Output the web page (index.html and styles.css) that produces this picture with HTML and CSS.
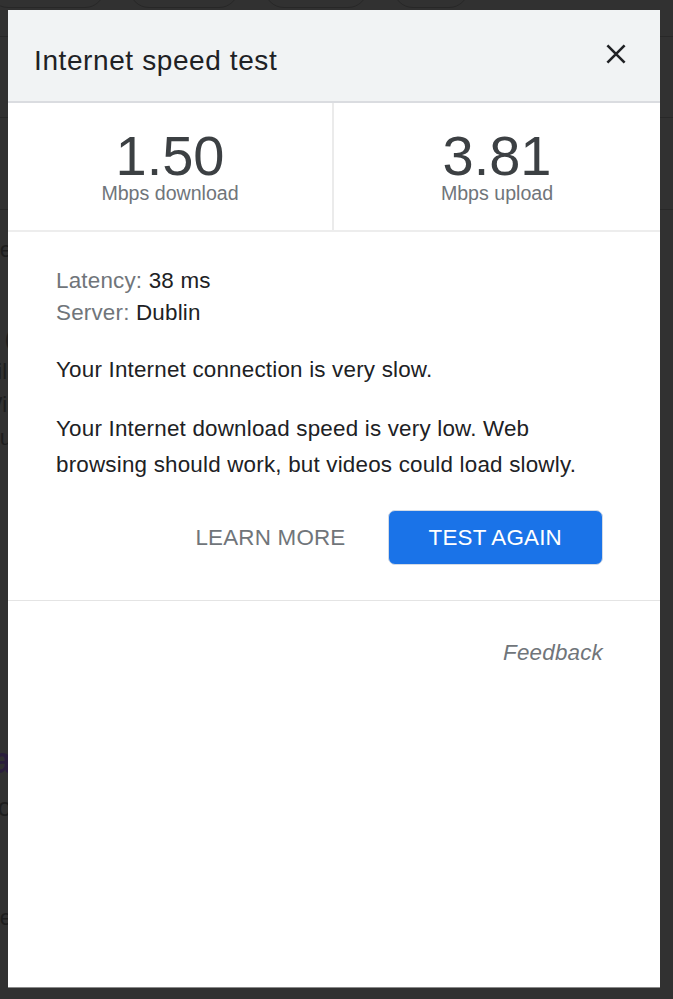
FILE: index.html
```html
<!DOCTYPE html>
<html lang="en">
<head>
<meta charset="utf-8">
<title>Internet speed test</title>
<link rel="stylesheet" href="styles.css">
</head>
<body>
<div class="page">
  <div class="chips">
    <span class="chip chip-a"></span>
    <span class="chip chip-b"></span>
    <span class="chip chip-c"></span>
    <span class="chip chip-d"></span>
  </div>
  <div class="band band-top"></div>
  <div class="band band-mid"></div>
  <div class="band band-low"></div>
  <div class="frags">
    <div class="frag frag-e"><span>Internet spee</span></div>
    <div class="frag-group">
      <div class="frag"><span>Run speed test (</span></div>
      <div class="frag"><span>will</span></div>
      <div class="frag"><span>Wil</span></div>
      <div class="frag"><span>valu</span></div>
    </div>
    <div class="frag frag-link"><span>Googl a</span></div>
    <div class="frag frag-o"><span>Goo</span></div>
    <div class="frag frag-last"><span>More</span></div>
  </div>
</div>

<div class="dialog" role="dialog" aria-label="Internet speed test">
  <header class="dlg-head">
    <h1 class="dlg-title">Internet speed test</h1>
    <button class="close" aria-label="Close">
      <svg width="22" height="22" viewBox="0 0 22 22" aria-hidden="true">
        <path d="M2.4 2.4 L19.6 19.6 M19.6 2.4 L2.4 19.6" stroke="#202124" stroke-width="2.6" fill="none"/>
      </svg>
    </button>
  </header>

  <section class="stats">
    <div class="stat stat-down">
      <div class="num">1.50</div>
      <div class="unit">Mbps download</div>
    </div>
    <div class="stat">
      <div class="num">3.81</div>
      <div class="unit">Mbps upload</div>
    </div>
  </section>

  <section class="details">
    <div class="meta">
      <div><span class="key">Latency:</span> 38 ms</div>
      <div><span class="key">Server:</span> Dublin</div>
    </div>
    <p class="msg">Your Internet connection is very slow.</p>
    <p class="msg">Your Internet download speed is very low. Web browsing should work, but videos could load slowly.</p>
    <div class="actions">
      <button class="btn-learn">LEARN MORE</button>
      <button class="btn-again">TEST AGAIN</button>
    </div>
  </section>

  <footer class="foot">
    <a class="feedback" href="#">Feedback</a>
  </footer>
</div>
</body>
</html>
```

FILE: styles.css
```css
html, body {
  margin: 0;
  padding: 0;
}

body {
  width: 673px;
  height: 999px;
  overflow: hidden;
  background: #313131;
  font-family: "Liberation Sans", Arial, sans-serif;
  position: relative;
}

/* ---------- dimmed page behind the dialog ---------- */
.page {
  width: 673px;
}

.chips {
  height: 9px;
  overflow: hidden;
  display: flex;
  align-items: flex-end;
  margin-left: -12px;
}

.chip {
  flex: none;
  height: 40px;
  margin-bottom: 1px;
  border: 1px solid #272727;
  border-radius: 20px;
}

.chip-a { width: 115px; }
.chip-b { width: 108px; margin-left: 24px; }
.chip-c { width: 102px; margin-left: 25px; }
.chip-d { width: 74px;  margin-left: 25px; }

.band {
  border-bottom: 1px solid #282828;
}

.band-top { height: 27px; }
.band-mid { height: 80px; }
.band-low { height: 91px; }

.frags {
  width: 12px;
  font-size: 22px;
  line-height: 33px;
  color: #1d1d1d;
}

.frag {
  display: flex;
  justify-content: flex-end;
  white-space: nowrap;
}

.frag span {
  flex: none;
}

.frag-e { margin-top: 23px; }

.frag-group { margin-top: 56px; }

.frag-link {
  margin-top: 285px;
  font-size: 36px;
  line-height: 44px;
  font-weight: bold;
  color: #2a1e3c;
}

.frag-o {
  margin-top: 8px;
  font-size: 26px;
}

.frag-last {
  margin-top: 77px;
}

/* ---------- dialog ---------- */
.dialog {
  position: absolute;
  left: 8px;
  top: 10px;
  width: 652px;
  height: 977px;
  background: #ffffff;
  box-shadow: 0 1px 0 #8a8a8a;
  color: #202124;
}

.dlg-head {
  display: flex;
  justify-content: space-between;
  align-items: flex-start;
  padding: 33px 33px 22px 26px;
  background: #f1f3f4;
  border-bottom: 2px solid #dadce0;
}

.dlg-title {
  margin: 0;
  font-size: 28px;
  line-height: 36px;
  font-weight: normal;
  letter-spacing: 0.6px;
  color: #202124;
}

.close {
  display: block;
  width: 22px;
  height: 22px;
  padding: 0;
  border: 0;
  background: none;
}

.close svg {
  display: block;
}

.stats {
  display: grid;
  grid-template-columns: 1fr 1fr;
  border-bottom: 2px solid #ededed;
}

.stat {
  padding: 27px 0 25px;
  text-align: center;
}

.stat-down {
  border-right: 2px solid #ebebeb;
}

.num {
  font-size: 56px;
  line-height: 52px;
  color: #3c4043;
}

.unit {
  font-size: 19.6px;
  line-height: 23px;
  color: #70757a;
}

.details {
  padding: 33px 57px 35px 48px;
  border-bottom: 1px solid #e4e4e4;
  font-size: 22.4px;
  letter-spacing: 0.2px;
}

.meta {
  line-height: 32px;
}

.key {
  color: #70757a;
}

.msg {
  margin: 23px 0 0;
  line-height: 36px;
}

.actions {
  display: flex;
  justify-content: flex-end;
  align-items: center;
  gap: 21px;
  margin-top: 27px;
}

.btn-learn,
.btn-again {
  font-family: inherit;
  font-size: 22.4px;
  line-height: 25px;
  letter-spacing: 0.2px;
  height: 55px;
  cursor: pointer;
}

.btn-learn {
  padding: 0 21px;
  border: 0;
  background: none;
  color: #70757a;
}

.btn-again {
  padding: 0 40px;
  border: 1px solid #d3dbe6;
  border-radius: 7px;
  background: #1a73e8;
  color: #ffffff;
}

.foot {
  padding: 39px 57px 0;
  text-align: right;
}

.feedback {
  font-size: 22.4px;
  line-height: 25px;
  font-style: italic;
  letter-spacing: 0.2px;
  color: #70757a;
  text-decoration: none;
}
```
